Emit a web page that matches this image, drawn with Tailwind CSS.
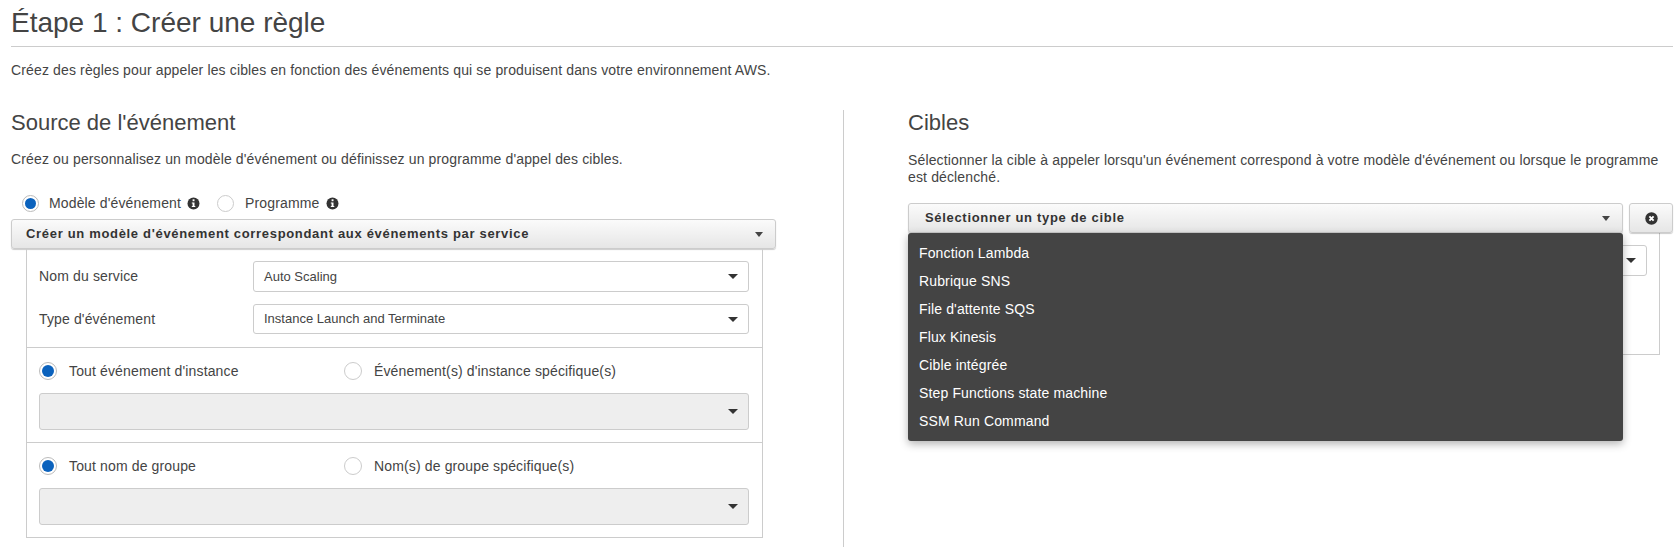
<!DOCTYPE html>
<html lang="fr">
<head>
  <meta charset="UTF-8" />
  <title>Étape 1 : Créer une règle</title>
  <script src="https://cdn.jsdelivr.net/npm/@tailwindcss/browser@4"></script>
</head>
<body class="bg-white text-[#444] font-['Liberation_Sans',Arial,sans-serif] text-[14px] tracking-[0.14px] h-[547px] overflow-hidden">
  <div class="pl-[11px] pr-[5px]">
    <!-- Header -->
    <h1 class="h-[47px] pt-[6px] text-[28px] leading-[34px] tracking-normal border-b border-[#ccc]">Étape 1 : Créer une règle</h1>
    <p class="mt-[15px] leading-[17px]">Créez des règles pour appeler les cibles en fonction des événements qui se produisent dans votre environnement AWS.</p>

    <div class="flex mt-[31px] h-[437px]">
      <!-- Source -->
      <section class="w-[765px] shrink-0">
        <h2 class="text-[22px] leading-[26px] tracking-normal">Source de l'événement</h2>
        <p class="mt-[15px] leading-[17px]">Créez ou personnalisez un modèle d'événement ou définissez un programme d'appel des cibles.</p>

        <div class="flex items-center h-[20px] mt-[25px] pl-[11px]">
          <span class="w-[17px] h-[17px] rounded-full border border-[#bbb] bg-white p-[2px] shrink-0"><span class="block w-full h-full rounded-full bg-[#0b62bd]"></span></span>
          <span class="ml-[10px]">Modèle d'événement</span>
          <svg class="ml-[6px]" width="13" height="13" viewBox="0 0 13 13"><circle cx="6.5" cy="6.5" r="6" fill="#333"/><rect x="5.6" y="2.3" width="1.9" height="1.9" fill="#fff"/><path d="M4.8 5.4h2.7v3.6h.8v1.1H4.8V9h.8V6.5h-.8z" fill="#fff"/></svg>
          <span class="ml-[17px] w-[17px] h-[17px] rounded-full border border-[#ccc] bg-white shrink-0"></span>
          <span class="ml-[11px]">Programme</span>
          <svg class="ml-[7px]" width="13" height="13" viewBox="0 0 13 13"><circle cx="6.5" cy="6.5" r="6" fill="#333"/><rect x="5.6" y="2.3" width="1.9" height="1.9" fill="#fff"/><path d="M4.8 5.4h2.7v3.6h.8v1.1H4.8V9h.8V6.5h-.8z" fill="#fff"/></svg>
        </div>

        <div class="flex items-center justify-between h-[30px] mt-[6px] pl-[14px] pr-[12px] border border-[#ccc] rounded-[3px] bg-gradient-to-b from-[#fbfbfb] to-[#e6e6e6] shadow-[0_1px_1px_rgba(0,0,0,0.2)]">
          <span class="font-bold text-[13px] tracking-[0.68px] text-[#333]">Créer un modèle d'événement correspondant aux événements par service</span>
          <span class="w-0 h-0 border-x-[4px] border-x-transparent border-t-[5px] border-t-[#444]"></span>
        </div>

        <div class="ml-[15px] mr-[13px] border border-t-0 border-[#ccc]">
          <div class="pl-[12px] pr-[13px] pt-[12px] pb-[13px] flex flex-col gap-[12px] border-b border-[#ccc]">
            <div class="flex items-center">
              <span class="w-[214px] shrink-0">Nom du service</span>
              <div class="flex-1 flex items-center justify-between h-[31px] pl-[10px] pr-[10px] border border-[#ccc] rounded-[3px] text-[13px] tracking-normal">
                <span>Auto Scaling</span>
                <span class="w-0 h-0 border-x-[5px] border-x-transparent border-t-[5px] border-t-[#333]"></span>
              </div>
            </div>
            <div class="flex items-center">
              <span class="w-[214px] shrink-0">Type d'événement</span>
              <div class="flex-1 flex items-center justify-between h-[30px] pl-[10px] pr-[10px] border border-[#ccc] rounded-[3px] text-[13px] tracking-normal">
                <span>Instance Launch and Terminate</span>
                <span class="w-0 h-0 border-x-[5px] border-x-transparent border-t-[5px] border-t-[#333]"></span>
              </div>
            </div>
          </div>

          <div class="pl-[12px] pr-[13px] pt-[14px] pb-[12px] border-b border-[#ccc]">
            <div class="flex items-center h-[18px]">
              <div class="flex items-center w-[305px]">
                <span class="w-[18px] h-[18px] rounded-full border border-[#bbb] bg-white p-[2px] shrink-0"><span class="block w-full h-full rounded-full bg-[#0b62bd]"></span></span>
                <span class="ml-[12px]">Tout événement d'instance</span>
              </div>
              <span class="w-[18px] h-[18px] rounded-full border border-[#ccc] bg-white shrink-0"></span>
              <span class="ml-[12px]">Événement(s) d'instance spécifique(s)</span>
            </div>
            <div class="flex items-center justify-end h-[37px] mt-[13px] pr-[10px] border border-[#ccc] rounded-[3px] bg-[#eee]">
              <span class="w-0 h-0 border-x-[5px] border-x-transparent border-t-[5px] border-t-[#333]"></span>
            </div>
          </div>

          <div class="pl-[12px] pr-[13px] pt-[14px] pb-[12px]">
            <div class="flex items-center h-[18px]">
              <div class="flex items-center w-[305px]">
                <span class="w-[18px] h-[18px] rounded-full border border-[#bbb] bg-white p-[2px] shrink-0"><span class="block w-full h-full rounded-full bg-[#0b62bd]"></span></span>
                <span class="ml-[12px]">Tout nom de groupe</span>
              </div>
              <span class="w-[18px] h-[18px] rounded-full border border-[#ccc] bg-white shrink-0"></span>
              <span class="ml-[12px]">Nom(s) de groupe spécifique(s)</span>
            </div>
            <div class="flex items-center justify-end h-[37px] mt-[13px] pr-[10px] border border-[#ccc] rounded-[3px] bg-[#eee]">
              <span class="w-0 h-0 border-x-[5px] border-x-transparent border-t-[5px] border-t-[#333]"></span>
            </div>
          </div>
        </div>
      </section>

      <!-- Cibles -->
      <section class="ml-[67px] pl-[64px] flex-1 border-l border-[#ccc]">
        <h2 class="text-[22px] leading-[26px] tracking-normal">Cibles</h2>
        <p class="mt-[16px] leading-[17px]">Sélectionner la cible à appeler lorsqu'un événement correspond à votre modèle d'événement ou lorsque le programme est déclenché.</p>

        <div class="relative mt-[17px]">
          <div class="flex gap-[6px]">
            <div class="flex-1 flex items-center justify-between h-[30px] pl-[16px] pr-[12px] border border-[#ccc] rounded-[3px] bg-gradient-to-b from-[#fbfbfb] to-[#e6e6e6] shadow-[0_1px_1px_rgba(0,0,0,0.2)]">
              <span class="font-bold text-[13px] tracking-[0.68px] text-[#333]">Sélectionner un type de cible</span>
              <span class="w-0 h-0 border-x-[4px] border-x-transparent border-t-[5px] border-t-[#444]"></span>
            </div>
            <div class="flex items-center justify-center w-[44px] h-[30px] border border-[#ccc] rounded-[3px] bg-gradient-to-b from-[#fbfbfb] to-[#e6e6e6] shadow-[0_1px_1px_rgba(0,0,0,0.2)]">
              <svg width="13" height="13" viewBox="0 0 13 13"><circle cx="6.5" cy="6.5" r="6.2" fill="#333"/><path d="M4.4 4.4l4.2 4.2M8.6 4.4l-4.2 4.2" stroke="#fff" stroke-width="1.9"/></svg>
            </div>
          </div>
          <!-- panel behind the open menu -->
          <div class="ml-[15px] mr-[13px] h-[122px] pt-[12px] pr-[12px] border-r border-b border-[#ccc]">
            <div class="flex items-center justify-end h-[31px] pr-[10px] border border-[#ccc] rounded-[3px]">
              <span class="w-0 h-0 border-x-[5px] border-x-transparent border-t-[5px] border-t-[#333]"></span>
            </div>
          </div>
          <!-- open menu -->
          <ul class="absolute left-0 top-[30px] w-[715px] py-[6px] bg-[#444] text-white rounded-[3px] shadow-[0_3px_8px_rgba(0,0,0,0.3)]">
            <li class="h-[28px] leading-[28px] px-[11px]">Fonction Lambda</li>
            <li class="h-[28px] leading-[28px] px-[11px]">Rubrique SNS</li>
            <li class="h-[28px] leading-[28px] px-[11px]">File d'attente SQS</li>
            <li class="h-[28px] leading-[28px] px-[11px]">Flux Kinesis</li>
            <li class="h-[28px] leading-[28px] px-[11px]">Cible intégrée</li>
            <li class="h-[28px] leading-[28px] px-[11px]">Step Functions state machine</li>
            <li class="h-[28px] leading-[28px] px-[11px]">SSM Run Command</li>
          </ul>
        </div>
      </section>
    </div>
  </div>
</body>
</html>
